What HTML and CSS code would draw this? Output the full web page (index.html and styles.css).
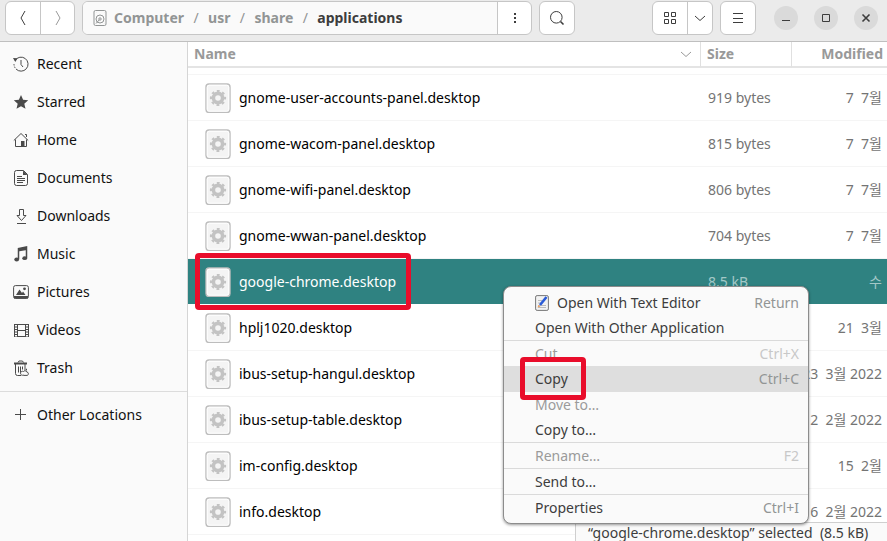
FILE: index.html
```html
<!DOCTYPE html>
<html lang="en">
<head>
<meta charset="utf-8">
<title>applications</title>
<link rel="stylesheet" href="styles.css">
</head>
<body>
<svg class="defs" width="0" height="0" aria-hidden="true">
  <symbol id="file" viewBox="0 0 26 30">
    <rect x="1" y="1" width="24" height="28.5" rx="3" fill="#f4f4f4" stroke="#bdbdbd" stroke-width="1.4"/>
    <rect x="2.2" y="2.2" width="21.6" height="26" rx="2" fill="none" stroke="#fff"/>
    <circle cx="13" cy="15" r="4.6" fill="none" stroke="#c3c3c3" stroke-width="3.6"/>
    <circle cx="13" cy="15" r="7" fill="none" stroke="#c3c3c3" stroke-width="2.2" stroke-dasharray="2.75 2.75" stroke-dashoffset="1.37"/>
  </symbol>
</svg>
<div class="window">
  <header class="bar">
    <div class="group">
      <button class="btn" aria-label="Back"><svg width="16" height="16" viewBox="0 0 16 16"><path d="M10 1 6 8l4 7"/></svg></button>
      <button class="btn dim" aria-label="Forward"><svg width="16" height="16" viewBox="0 0 16 16"><path d="m6 1 4 7-4 7"/></svg></button>
    </div>
    <div class="group path">
      <nav class="crumbs">
        <svg width="14" height="16" viewBox="0 0 14 16"><rect x="1" y=".5" width="12" height="15" rx="1.5"/><circle cx="7" cy="9" r="4"/><circle cx="7" cy="9" r="1.2"/><path d="m3 13.5 3.2-3.6M3 2.5h.1M11 2.5h.1M11 13.5h.1"/></svg>
        <a href="#">Computer</a><span>/</span><a href="#">usr</a><span>/</span><a href="#">share</a><span>/</span><a href="#" class="current">applications</a>
      </nav>
      <button class="btn" aria-label="Folder menu"><svg width="16" height="16" viewBox="0 0 16 16"><path class="fill" d="M7 3h2v2H7zM7 7h2v2H7zM7 11h2v2H7z"/></svg></button>
    </div>
    <button class="btn alone" aria-label="Search"><svg width="16" height="16" viewBox="0 0 16 16"><circle cx="7.3" cy="7.3" r="5.8"/><path d="m11.5 11.5 3 3" stroke-width="1.6"/></svg></button>
    <div class="group push">
      <button class="btn" aria-label="Grid view"><svg width="16" height="16" viewBox="0 0 16 16"><path d="M2.500 2.500h4v4h-4zM9.500 2.500h4v4h-4zM2.500 9.500h4v4h-4zM9.500 9.500h4v4h-4z"/></svg></button>
      <button class="btn slim" aria-label="View options"><svg width="16" height="16" viewBox="0 0 16 16"><path d="m3 6 5 4.500L13 6"/></svg></button>
    </div>
    <button class="btn alone" aria-label="Main menu"><svg width="16" height="16" viewBox="0 0 16 16"><path d="M3 3.500h10M3 8.500h10M3 12.500h10"/></svg></button>
    <div class="controls">
      <button aria-label="Minimize"><svg width="16" height="16" viewBox="0 0 16 16"><path d="M4 10.500h8"/></svg></button>
      <button aria-label="Maximize"><svg width="16" height="16" viewBox="0 0 16 16"><path d="M4.500 4.500h7v7h-7z"/></svg></button>
      <button aria-label="Close"><svg width="16" height="16" viewBox="0 0 16 16"><path d="m4.500 4.500 7 7m0-7-7 7" stroke-width="1.6"/></svg></button>
    </div>
  </header>
  <div class="body">
    <nav class="side">
      <a href="#"><svg width="16" height="16" viewBox="0 0 16 16"><path d="M2.200 4.300A7 7 0 1 1 3 13M8 4v4.500l2 2.500"/><path d="M1 8a7 7 0 0 0 2 5" stroke-dasharray="1.500 1.200"/><path class="fill" d="m0 2 4.500.3L2.300 6z"/></svg>Recent</a>
      <a href="#"><svg width="16" height="16" viewBox="0 0 16 16"><path class="fill" d="m8 1 2.100 4.800 5.100.5-3.900 3.400 1.200 5.100L8 12.200l-4.500 2.600 1.200-5.100L.8 6.300l5.100-.5z"/></svg>Starred</a>
      <a href="#"><svg width="16" height="16" viewBox="0 0 16 16"><path d="m.8 8.500 7.200-7 7.200 7M2.500 7.500v7h11v-7M12 2.500h1.500V5"/><path class="fill" d="M8 9h3.500v5.500H8z"/></svg>Home</a>
      <a href="#"><svg width="16" height="16" viewBox="0 0 16 16"><path d="M3.500.5h7l4 4v9a2 2 0 0 1-2 2h-9a2 2 0 0 1-2-2v-11a2 2 0 0 1 2-2zM4 6.500h5M4 8.500h8M4 10.500h8M4 12.500h6"/><path class="fill" d="M10 .5v4.500h4.500z"/></svg>Documents</a>
      <a href="#"><svg width="16" height="16" viewBox="0 0 16 16"><path d="M6.500 1.500h4v6H13L8.500 12.500 4 7.500h2.500zM4 15.500h9"/></svg>Downloads</a>
      <a href="#"><svg width="16" height="16" viewBox="0 0 16 16"><path d="M5.500 13V2.500l8-1.500v11" stroke-width="1.500"/><path class="fill" d="M5 2.500 14 1v3L5 5.500z"/><ellipse class="fill" cx="3.700" cy="13.500" rx="2.400" ry="1.900"/><ellipse class="fill" cx="11.700" cy="12.200" rx="2.400" ry="1.900"/></svg>Music</a>
      <a href="#"><svg width="16" height="16" viewBox="0 0 16 16"><rect x=".6" y="1.600" width="14.800" height="12.800" rx="1.800"/><path class="fill" d="M1 12h14v2.500H1zM3 11l3.500-5.500L9 9l1-1.500 2.500 3.500z"/><circle class="fill" cx="11.500" cy="4.800" r="1.400"/></svg>Pictures</a>
      <a href="#"><svg width="16" height="16" viewBox="0 0 16 16"><path d="M1.500 2v13M4.500 2v13M12.500 2v13M15.500 2v13M4.500 2.500h8M4.500 8.500h8M4.500 14.500h8"/><path d="M3 2v13M14 2v13" stroke-dasharray="1 1.500" stroke-width="2"/></svg>Videos</a>
      <a href="#"><svg width="16" height="16" viewBox="0 0 16 16"><path d="M2.500 4v9.500a2 2 0 0 0 2 2H8M5.500 6.500v6M7.500 6.500v6M9.500 6.500v3M12 4v4M5 2.500l1-1.500h3.500l1 1.500"/><path d="M1 3.500h13" stroke-width="2"/><path d="M10.500 15a2 2 0 1 1 0-3.500l1.500-1 2 1.500a1.800 1.800 0 0 1 .3 3.400h-4M11 9h2.500v1.500"/></svg>Trash</a>
      <hr>
      <a href="#"><svg width="16" height="16" viewBox="0 0 16 16"><path d="M2 7.500h11M7.500 2v11"/></svg>Other Locations</a>
    </nav>
    <main>
      <table>
        <colgroup><col><col class="c-size"><col class="c-mod"></colgroup>
        <thead><tr><th><div>Name<svg width="16" height="16" viewBox="0 0 16 16"><path d="m3 6 5 4.500L13 6"/></svg></div></th><th>Size</th><th>Modified</th></tr></thead>
        <tbody>
          <tr class="peek"><td colspan="3"></td></tr>
          <tr><td><div><svg width="26" height="30"><use href="#file"/></svg>gnome-user-accounts-panel.desktop</div></td><td>919 bytes</td><td>7  7월</td></tr>
          <tr><td><div><svg width="26" height="30"><use href="#file"/></svg>gnome-wacom-panel.desktop</div></td><td>815 bytes</td><td>7  7월</td></tr>
          <tr><td><div><svg width="26" height="30"><use href="#file"/></svg>gnome-wifi-panel.desktop</div></td><td>806 bytes</td><td>7  7월</td></tr>
          <tr><td><div><svg width="26" height="30"><use href="#file"/></svg>gnome-wwan-panel.desktop</div></td><td>704 bytes</td><td>7  7월</td></tr>
          <tr class="selected"><td><div><svg width="26" height="30"><use href="#file"/></svg>google-chrome.desktop</div></td><td>8.5 kB</td><td>수</td></tr>
          <tr><td><div><svg width="26" height="30"><use href="#file"/></svg>hplj1020.desktop</div></td><td></td><td>21  3월</td></tr>
          <tr><td><div><svg width="26" height="30"><use href="#file"/></svg>ibus-setup-hangul.desktop</div></td><td></td><td>23  3월 2022</td></tr>
          <tr><td><div><svg width="26" height="30"><use href="#file"/></svg>ibus-setup-table.desktop</div></td><td></td><td>2  2월 2022</td></tr>
          <tr><td><div><svg width="26" height="30"><use href="#file"/></svg>im-config.desktop</div></td><td></td><td>15  2월</td></tr>
          <tr><td><div><svg width="26" height="30"><use href="#file"/></svg>info.desktop</div></td><td></td><td>6  2월 2022</td></tr>
        </tbody>
      </table>
      <div class="status">“google-chrome.desktop” selected  (8.5 kB)</div>
    </main>
  </div>
</div>
<div class="menu" role="menu">
  <button role="menuitem"><svg width="14" height="16" viewBox="0 0 14 16"><rect x=".6" y=".6" width="12.800" height="14.800" rx="1.500" fill="#f2f2f2" stroke="#777"/><path d="M3 5.500h4M3 8h3M3 10.500h8M3 12.500h8" stroke="#bbb"/><path d="m5 10 6.500-8" stroke="#2a5bd7" stroke-width="2.600"/><path d="m2.500 12.500 1-2.500 2 1.500z" fill="#f0a060" stroke="none"/></svg>Open With Text Editor<kbd>Return</kbd></button>
  <button role="menuitem">Open With Other Application</button>
  <hr>
  <button role="menuitem" disabled>Cut<kbd>Ctrl+X</kbd></button>
  <button role="menuitem" class="active">Copy<kbd>Ctrl+C</kbd></button>
  <button role="menuitem" disabled>Move to…</button>
  <button role="menuitem">Copy to…</button>
  <hr>
  <button role="menuitem" disabled>Rename…<kbd>F2</kbd></button>
  <hr>
  <button role="menuitem">Send to…</button>
  <hr>
  <button role="menuitem">Properties<kbd>Ctrl+I</kbd></button>
</div>
<div class="mark mark-file"></div>
<div class="mark mark-copy"></div>
</body>
</html>
```
FILE: styles.css
```css
* { box-sizing: border-box; }
body {
  margin: 0;
  font: 14px/20px "Noto Sans", "Noto Sans CJK KR", sans-serif;
  color: #111;
  background: #fff;
}
button { font: inherit; color: inherit; border: 0; padding: 0; margin: 0; background: none; }
a { color: inherit; text-decoration: none; }
svg { flex: none; fill: none; stroke: currentColor; display: block; }
svg .fill { fill: currentColor; stroke: none; }
.defs { position: absolute; }

.window { height: 100vh; display: flex; flex-direction: column; overflow: hidden; }

.bar {
  flex: none;
  display: flex;
  align-items: flex-start;
  height: 42px;
  padding: 1px 9px 0 5px;
  gap: 7px;
  background: #ebebeb;
  border-bottom: 1px solid #bfbfbf;
  color: #3d3d3d;
}
.group, .alone { display: flex; height: 34px; border: 1px solid #c6c6c6; border-radius: 6px; background: #fff; overflow: hidden; }
.btn { display: flex; align-items: center; justify-content: center; width: 34px; }
.btn + .btn, .crumbs + .btn { border-left: 1px solid #c6c6c6; }
.btn.alone { width: 36px; border: 1px solid #c6c6c6; }
.btn.slim { width: 25px; }
.dim { color: #999; }
.path { flex: 0 1 450px; }
.crumbs { flex: 1; display: flex; align-items: center; padding-left: 10px; background: #fafafa; color: #929595; font-weight: 700; }
.crumbs svg { margin-right: 7px; }
.crumbs span { width: 24px; text-align: center; font-weight: 400; }
.crumbs .current { color: #3d3d3d; }
.push { margin-left: auto; }
.controls { display: flex; gap: 16px; padding: 5px 0 0 11px; }
.controls button { display: flex; align-items: center; justify-content: center; width: 24px; height: 24px; border-radius: 50%; background: #dadada; }

.body { flex: 1; display: flex; min-height: 0; }
.side { flex: none; width: 188px; padding-top: 3px; background: #fafafa; border-right: 1px solid #d5d5d5; }
.side a { display: flex; align-items: center; gap: 8px; height: 38px; padding-left: 13px; }
.side svg { color: #4a4a4a; }
.side hr { margin: 4px 0; border: 0; border-top: 1px solid #dcdcdc; }

main { flex: 1; position: relative; overflow: hidden; }
table { width: 100%; table-layout: fixed; border-collapse: separate; border-spacing: 0; }
.c-size { width: 91px; }
.c-mod { width: 95px; }
th { height: 26px; padding: 0 6px; text-align: left; color: #999; border-bottom: 2px solid #e4e4e4; border-right: 1px solid #e0e0e0; font-weight: 700; }
th div { display: flex; align-items: center; justify-content: space-between; }
th:last-child { padding-right: 4px; text-align: right; border-right: 0; }
td { height: 46px; padding: 0; border-bottom: 1px solid #f5f5f5; color: #747474; white-space: pre; }
td:first-child { padding-left: 17px; color: #000; }
td:nth-child(2) { padding-left: 7px; }
td:last-child { padding-right: 5px; text-align: right; }
td div { display: flex; align-items: center; gap: 8px; }
.peek td { height: 7px; }
.selected td { background: #2f8281; border-bottom-color: #fff; color: #a3c8c7; }
.selected td:first-child { color: #fff; }

.status { position: absolute; right: 0; bottom: 0; min-width: 312px; padding: 1px 10px 0 12px; border: 1px solid #cfcfcf; border-width: 1px 0 0 1px; background: #fafafa; color: #3d3d3d; line-height: 17px; white-space: pre; }

.menu {
  position: absolute;
  left: 503px;
  top: 286px;
  width: 306px;
  padding: 3px 0;
  border: 1px solid #8c8c8c;
  border-radius: 8px;
  background: #fafafa;
  color: #3d3d3d;
  box-shadow: 0 1px 3px rgba(0, 0, 0, .4);
}
.menu button { display: flex; align-items: center; gap: 8px; width: 100%; height: 25px; padding: 0 9px 0 31px; }
.menu hr { margin: 0; border: 0; border-top: 1px solid #dadada; }
.menu kbd { margin-left: auto; font: inherit; color: #929595; }
.menu button:disabled { color: #9b9b9b; }
.menu button:disabled kbd { color: #c8c8c8; }
.menu .active { height: 26px; background: #dedede; }

.mark { position: absolute; border: 5px solid #e90d2b; border-radius: 4px; pointer-events: none; }
.mark-file { left: 195px; top: 253px; width: 216px; height: 57px; }
.mark-copy { left: 520px; top: 357px; width: 66px; height: 43px; }
```
